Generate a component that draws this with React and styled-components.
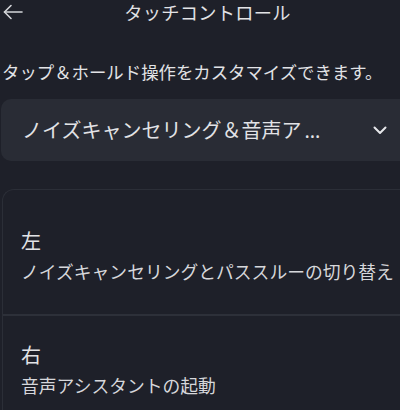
import React from 'react';
import styled, { createGlobalStyle } from 'styled-components';

const GlobalStyle = createGlobalStyle`
    html, body{
        margin: 0;
        padding: 0;
        background: #1e2029;
        overflow: hidden;
    }
    body{
        font-family: "Noto Sans CJK JP", "Noto Sans", sans-serif;
        color: #e2e3e6;
    }
`

const Page = styled.div`
    width: 400px;
    height: 410px;
    overflow: hidden;
`

const Header = styled.div`
    display: flex;
    align-items: center;
    height: 24px;
`

const BackButton = styled.div`
    width: 22px;
    padding-left: 3px;
    display: flex;
    align-items: center;
    color: #d4d5d9;
`

const Title = styled.h1`
    flex: 1;
    margin: 0;
    padding-right: 10px;
    text-align: center;
    font-size: 18.2px;
    font-weight: 400;
    line-height: 24px;
    letter-spacing: 0.3px;
`

const Subtitle = styled.p`
    margin: 36px 0 0 2px;
    font-size: 17.4px;
    line-height: 24px;
    white-space: nowrap;
`

const Select = styled.div`
    margin: 15px 0 0 1px;
    width: 420px;
    height: 62px;
    box-sizing: border-box;
    background: #292c35;
    border-radius: 10px;
    display: flex;
    align-items: center;
    justify-content: space-between;
    padding: 0 34px 0 21px;
`

const SelectText = styled.span`
    font-size: 20px;
    line-height: 26px;
    white-space: nowrap;
`

const Ellipsis = styled.span`
    font-family: "Noto Sans", sans-serif;
    font-size: 20px;
    margin-left: 3px;
`

const Card = styled.div`
    margin: 28px 0 0 2px;
    width: 430px;
    border: 1px solid #2b2e37;
    border-right: none;
    border-radius: 12px;
    padding-top: 12px;
`

const Row = styled.div`
    padding: 26px 0 30px 18px;
    border-top: ${props => props.divided ? '2px solid #2d3039' : 'none'};
`

const RowTitle = styled.div`
    font-size: 20px;
    line-height: 26px;
`

const RowDesc = styled.div`
    margin-top: 4px;
    font-size: 17.8px;
    line-height: 26px;
    color: #d6d7db;
    white-space: nowrap;
`

const ArrowIcon = () => (
    <svg width="20" height="16" viewBox="0 0 20 16" fill="none" stroke="currentColor" strokeWidth="1.6" strokeLinecap="round" strokeLinejoin="round">
        <path d="M19 8H1.5" />
        <path d="M8 1.5L1.5 8L8 14.5" />
    </svg>
)

const Chevron = () => (
    <svg width="14" height="9" viewBox="0 0 14 9" fill="none" stroke="#e6e7ea" strokeWidth="2" strokeLinecap="round" strokeLinejoin="round">
        <path d="M1.5 1.5L7 7L12.5 1.5" />
    </svg>
)

const App = () => {
    return (
        <Page>
            <GlobalStyle />
            <Header>
                <BackButton><ArrowIcon /></BackButton>
                <Title>タッチコントロール</Title>
            </Header>
            <Subtitle>タップ＆ホールド操作をカスタマイズできます。</Subtitle>
            <Select>
                <SelectText>ノイズキャンセリング＆音声ア<Ellipsis>…</Ellipsis></SelectText>
                <Chevron />
            </Select>
            <Card>
                <Row>
                    <RowTitle>左</RowTitle>
                    <RowDesc>ノイズキャンセリングとパススルーの切り替え</RowDesc>
                </Row>
                <Row divided>
                    <RowTitle>右</RowTitle>
                    <RowDesc>音声アシスタントの起動</RowDesc>
                </Row>
            </Card>
        </Page>
    )
}

export default App
